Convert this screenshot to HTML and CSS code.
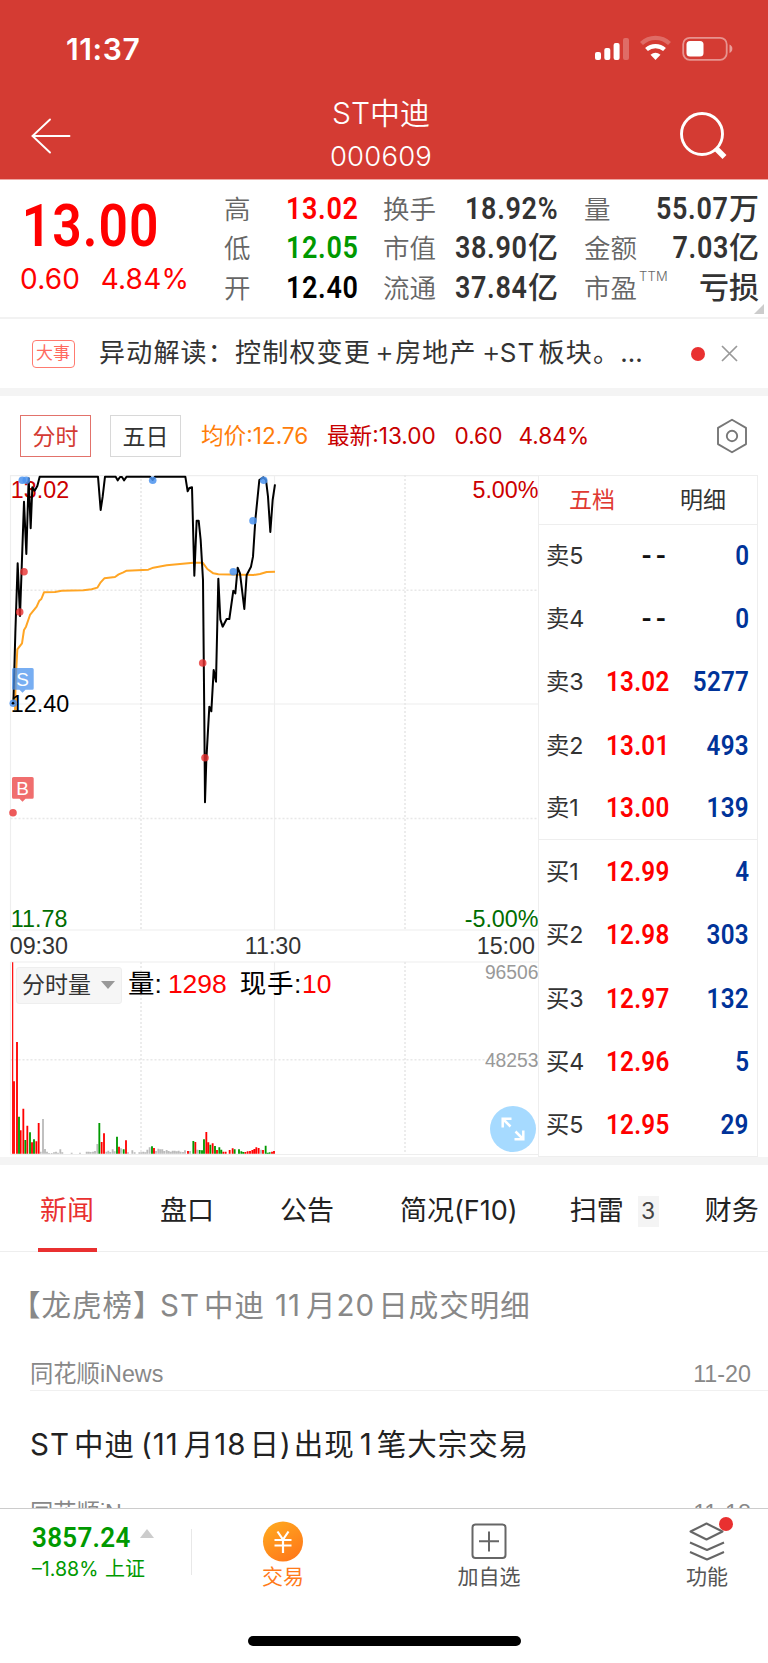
FILE: index.html
```html
<!DOCTYPE html>
<html lang="zh-CN">
<head>
<meta charset="utf-8">
<title>ST中迪 000609</title>
<link rel="stylesheet" href="styles.css">
</head>
<body>
<div class="screen">
  <header class="header">
    <div class="status">
      <span class="clock">11:37</span>
      <svg class="status-icons" width="140" height="28" viewBox="0 0 140 28" fill="#fff">
        <rect x="0" y="17" width="6" height="8" rx="2"/><rect x="9.3" y="13" width="6" height="12" rx="2"/><rect x="18.6" y="8" width="6" height="17" rx="2"/><rect x="28" y="3" width="6" height="22" rx="2" opacity=".25"/>
        <g fill="none" stroke="#fff" stroke-width="4.2">
          <path d="M46.5 8.5a20 20 0 0 1 28 0" opacity=".25"/><path d="M51.5 14.5a13.5 13.5 0 0 1 18 0"/>
        </g>
        <path d="M55.5 19.7a8 8 0 0 1 10 0l-5 5.300z"/>
        <rect x="88.200" y="2.800" width="43.500" height="22" rx="6.500" fill="none" stroke="#fff" stroke-width="1.800" opacity=".45"/>
        <rect x="91.500" y="6" width="17" height="15.500" rx="3.500"/><path d="M134.500 9.500a4.600 4.600 0 0 1 0 8.500z" opacity=".5"/>
      </svg>
    </div>
    <div class="nav">
      <svg width="40" height="36" viewBox="0 0 40 36" fill="none" stroke="#fff" stroke-width="1.900" stroke-linecap="round"><path d="M38.500 18H1.500M19 1.500L1.500 18L19 34.500"/></svg>
      <div class="nav-title"><span class="stock-name">ST中迪</span><span class="stock-code">000609</span></div>
      <svg width="48" height="48" viewBox="0 0 48 48" fill="none" stroke="#fff"><circle cx="22" cy="22" r="20.500" stroke-width="2.900"/><path d="M36.500 37l8 8" stroke-width="5.500"/></svg>
    </div>
  </header>

  <section class="quote">
    <div class="quote-main">
      <span class="price">13.00</span>
      <div class="change"><span>0.60</span><span>4.84%</span></div>
    </div>
    <dl class="stats stats-a">
      <dt>高</dt><dd class="up"><span>13.02</span></dd><dt>低</dt><dd class="down"><span>12.05</span></dd><dt>开</dt><dd class="flat"><span>12.40</span></dd>
    </dl>
    <dl class="stats stats-b">
      <dt>换手</dt><dd><span>18.92%</span></dd><dt>市值</dt><dd><span>38.90</span><b>亿</b></dd><dt>流通</dt><dd><span>37.84</span><b>亿</b></dd>
    </dl>
    <dl class="stats stats-c">
      <dt>量</dt><dd><span>55.07</span><b>万</b></dd><dt>金额</dt><dd><span>7.03</span><b>亿</b></dd><dt class="ttm">市盈<sup>TTM</sup></dt><dd><b>亏损</b></dd>
    </dl>
    <i class="corner"></i>
  </section>

  <section class="event">
    <span class="event-tag">大事</span>
    <span class="event-text">异动解读：控制权变更<i class="plus">+</i>房地产<i class="plus2">+</i>ST<i class="gap"></i>板块。<i class="dots">…</i></span>
    <i class="event-dot"></i>
    <svg width="17" height="17" viewBox="0 0 17 17" fill="none" stroke="#999" stroke-width="1.700"><path d="M1 1l15 15M16 1L1 16"/></svg>
  </section>

  <section class="toolbar">
    <button class="period active">分时</button><button class="period">五日</button>
    <span class="avg">均价:12.76</span><span class="last">最新:13.00</span><span class="last-diff">0.60</span><span class="last-pct">4.84%</span>
    <svg class="gear" width="32" height="36" viewBox="0 0 32 36" fill="none" stroke="#777" stroke-width="1.900"><path d="M16 1.800L30 9.900V26.100L16 34.200L2 26.100V9.900Z" stroke-linejoin="round"/><circle cx="16" cy="18" r="5.200"/></svg>
  </section>

  <section class="market">
    <div class="chart">
      <svg width="538" height="682" viewBox="0 475 538 682">
        <g fill="none" stroke="#eee" stroke-width="1.200">
          <path d="M10.500 475.600H538M10.500 704H538M10.500 930H538M10.500 962H538M10.500 1154.500H538M10.500 475V930M10.500 962V1154M274.500 475V930M274.500 962V1154"/>
          <path d="M10.500 590.300H538M10.500 818.500H538M141 475V930M405 475V930M10.500 1059.700H538M141 962V1154M405 962V1154" stroke="#e8e8e8" stroke-width="1.600" stroke-dasharray="2 2"/>
        </g>
        <g class="axis">
          <text x="10.800" y="497.500" fill="#c00">13.02</text><text x="538.500" y="497.500" fill="#c00" text-anchor="end">5.00%</text>
          <text x="10.800" y="926.500" fill="#006d00">11.78</text><text x="538.500" y="926.500" fill="#006d00" text-anchor="end">-5.00%</text>
          <text x="9.700" y="954" fill="#333">09:30</text><text x="273" y="954" fill="#333" text-anchor="middle">11:30</text><text x="535" y="954" fill="#333" text-anchor="end">15:00</text>
        </g>
        <g transform="translate(0 400) scale(.33333)" fill="none" stroke-linejoin="round">
          <path stroke="#ffa524" stroke-width="6" d="M45 930L47 840L52 748L66 730L72 690L78 680L90 645L110 620L118 602L124 597L132 577L165 576L185 572L250 571L275 568L292 563L302 547L313 535L345 531L356 523L370 517L380 512L445 509L460 503L500 496L580 488L608 488L622 507L640 520L655 523L760 525L780 522L800 516L825 515"/>
          <path stroke="#000" stroke-width="6" d="M40 912L46 700L53 490L60 648L72 305L79 462L86 235L92 385L97 262L104 272L112 258L119 230H294L302 330L308 290L315 230H347L353 241L360 231H366L372 241L380 230H450L458 240L465 230H556L563 274L568 264L576 262L583 527L590 362H596L602 420L609 540L613 960L615 1207L619 1080L628 920L634 934L641 810L648 845L655 536L661 658L668 680L680 657H688L700 572L706 580L713 503L720 520L733 627L740 525L753 500L759 470L766 360L778 240L790 232L798 240L804 290L811 396L818 300L825 253"/>
        </g>
        <text class="axis" x="10.800" y="711.500" fill="#000">12.40</text>
        <g fill="#4b93ee" fill-opacity=".85"><circle cx="22.300" cy="480.300" r="3.800"/><circle cx="26.300" cy="480.300" r="3.800"/><circle cx="152.700" cy="480.300" r="3.800"/><circle cx="263.700" cy="480.300" r="3.800"/><circle cx="253" cy="520.700" r="3.800"/><circle cx="233.300" cy="571.700" r="3.800"/><circle cx="13.300" cy="703.300" r="3.800"/><path d="M13.500 668h18.700a1.500 1.500 0 0 1 1.500 1.500v18.700a1.500 1.500 0 0 1-1.500 1.500h-6.700l-3 3l-3-3h-6a1.500 1.500 0 0 1-1.500-1.500v-18.700a1.500 1.500 0 0 1 1.500-1.500z" fill-opacity=".75"/></g>
        <circle cx="13" cy="703.300" r="1.300"/>
        <g fill="#e93030" fill-opacity=".8"><circle cx="24" cy="571.700" r="3.800"/><circle cx="19.700" cy="612" r="3.800"/><circle cx="202.700" cy="663" r="3.800"/><circle cx="205" cy="757.700" r="3.800"/><circle cx="13" cy="812.700" r="3.800"/><path d="M13.500 777h18.700a1.500 1.500 0 0 1 1.500 1.500v18.700a1.500 1.500 0 0 1-1.500 1.500h-6.700l-3 3l-3-3h-6a1.500 1.500 0 0 1-1.500-1.500v-18.700a1.500 1.500 0 0 1 1.500-1.500z" fill-opacity=".7"/></g>
        <g class="marker"><text x="22.700" y="686">S</text><text x="22.700" y="795">B</text></g>
        <g transform="translate(0 940) scale(.33333)" fill="none" stroke-width="5.500">
          <path stroke="#bbb" d="M122 641v-6M129 641V537M135 641V627M141 641v-6M147 641v-2M155 641v-2M162 641v-4M168 641v-6M174 641v-3M181 641V628M187 641v-4M215 641v-3M240 641v-3M260 641v-6M266 641v-6M272 641v-5M279 641v-6M285 641v-8M292 641V612M319 641v-6M325 641v-9M331 641v-5M338 641V628M344 641v-7M363 641v-16M384 641v-4M397 641v-10M404 641v-4M418 641v-4M424 641v-4M430 641v-6M436 641v-4M442 641v-12M449 641V622M468 641v-8M475 641v-15M481 641v-13M487 641v-13M493 641v-8M500 641v-11M506 641v-8M512 641v-6M518 641v-9M524 641v-9M530 641v-7M536 641v-9M542 641v-6M549 641v-5M555 641v-10M570 641v-8M592 641v-12M783 641v-12"/>
          <path stroke="#f00" d="M42 641V424M51 641V306M62 641V571M70 641V506M82 641V557M96 641V607M109 641V604M116 641V549M305 641V606M312 641V580M357 641V620M378 641V601M462 641V624M564 641v-8M586 641V606M619 641V576M625 641V607M638 641V610M651 641V630M670 641v-6M677 641v-6M689 641V630M698 641V625M736 641v-5M743 641v-7M750 641v-8M757 641v-11M763 641V627M769 641V622M776 641V624M789 641V630M816 641v-6M822 641V633"/>
          <path stroke="#f00" stroke-width="3.500" d="M38 641V67"/>
          <path stroke="#090" d="M57 641V530M76 641V600M90 641V577M102 641V598M298 641V549M351 641V590M371 641V628M456 641V619M580 641V603M599 641V630M606 641V631M612 641V598M631 641V614M645 641V618M658 641V622M664 641V629M704 641V628M717 641V628M724 641V634M730 641V636M797 641V617M803 641v-3M809 641v-4"/>
        </g>
        <g class="vol-axis"><text x="538.500" y="979">96506</text><text x="538.500" y="1067">48253</text></g>
      </svg>
      <div class="vol-legend"><span class="vol-select">分时量<i></i></span><span>量:</span><em class="v1">1298</em><span class="v2">现手:</span><em>10</em></div>
      <svg class="expand" width="46" height="46" viewBox="0 0 46 46"><circle cx="23" cy="23" r="23" fill="#a6daff"/><path d="M20.500 20.500L13 13M12.700 21.500V12.700H21.500M25.500 25.500L33 33M33.300 24.500V33.300H24.500" fill="none" stroke="#fff" stroke-width="2.500"/></svg>
    </div>
    <div class="book">
      <div class="book-tabs"><span class="active">五档</span><span>明细</span></div>
      <div class="row"><span>卖5</span><b class="none">--</b><em>0</em></div>
      <div class="row"><span>卖4</span><b class="none">--</b><em>0</em></div>
      <div class="row"><span>卖3</span><b>13.02</b><em>5277</em></div>
      <div class="row"><span>卖2</span><b>13.01</b><em>493</em></div>
      <div class="row ask-end"><span>卖1</span><b>13.00</b><em>139</em></div>
      <div class="row"><span>买1</span><b>12.99</b><em>4</em></div>
      <div class="row"><span>买2</span><b>12.98</b><em>303</em></div>
      <div class="row"><span>买3</span><b>12.97</b><em>132</em></div>
      <div class="row"><span>买4</span><b>12.96</b><em>5</em></div>
      <div class="row"><span>买5</span><b>12.95</b><em>29</em></div>
    </div>
  </section>

  <nav class="tabs">
    <span class="tab active">新闻</span><span class="tab">盘口</span><span class="tab">公告</span><span class="tab">简况(F10)</span><span class="tab">扫雷<i class="count">3</i></span><span class="tab">财务</span>
  </nav>

  <section class="news">
    <article class="item read">
      <h3><span class="bracket">【龙虎榜】</span><span class="n1">ST</span><span class="n2">中迪</span><span class="n3">11</span><span class="n4">月</span><span class="n5">20</span><span class="n6">日成交明细</span></h3>
      <p><span>同花顺iNews</span><time>11-20</time></p>
    </article>
    <article class="item">
      <h3><span>ST</span><span class="n2">中迪</span><span class="m3">(11</span><span class="m4">月</span><span class="m5">18</span><span class="m6">日</span><span class="m7">)</span><span class="m8">出现</span><span class="m9">1</span><span class="m10">笔大宗交易</span></h3>
      <p><span>同花顺iNews</span><time>11-18</time></p>
    </article>
  </section>

  <footer class="footer">
    <div class="bar">
      <div class="index"><div class="index-top"><b>3857.24</b><i></i></div><span>–1.88% <em>上证</em></span></div>
      <div class="action trade">
        <svg width="42" height="42" viewBox="0 0 42 42"><defs><linearGradient id="orange" x1="0" y1="0" x2=".6" y2="1"><stop offset="0" stop-color="#ffac1f"/><stop offset="1" stop-color="#ff7b1a"/></linearGradient></defs><circle cx="21" cy="21.500" r="20" fill="url(#orange)"/><path d="M15.500 11.500l5.500 8l5.500-8M12.500 20h17M12.500 25.500h17M21 19.500v13.500" fill="none" stroke="#fff" stroke-width="2.200"/></svg>
        <span>交易</span>
      </div>
      <div class="action add">
        <svg width="42" height="42" viewBox="0 0 42 42" fill="none" stroke="#666" stroke-width="2"><rect x="4.500" y="4.500" width="33" height="33.500" rx="3"/><path d="M21 11.500v20M11 21.300h20"/></svg>
        <span>加自选</span>
      </div>
      <div class="action more">
        <svg width="42" height="42" viewBox="0 0 42 42" fill="none" stroke="#666" stroke-width="2" stroke-linejoin="round"><path d="M20.500 3.500L36.500 11.500L20.500 19.500L4.500 11.500ZM4 22.500L21 30L38 22.500M4 32L21 39.500L38 32"/></svg>
        <i class="badge"></i>
        <span>功能</span>
      </div>
    </div>
    <i class="home"></i>
  </footer>
</div>
</body>
</html>
```
FILE: styles.css
```css
* { box-sizing: border-box; margin: 0; padding: 0; }
body { width: 768px; background: #fff; font-family: "Inter", "Noto Sans CJK SC", sans-serif; color: #333; }
i, em { font-style: normal; }
svg { display: block; flex: none; }
.screen { width: 768px; height: 1663px; display: flex; flex-direction: column; overflow: hidden; white-space: nowrap; }

.header { height: 180px; flex: none; background: #d43b33; border-bottom: 1px solid #eda7a3; color: #fff; }
.status { height: 94px; padding: 35px 33px 0 66px; display: flex; justify-content: space-between; align-items: flex-start; }
.clock { font-size: 30px; line-height: 28px; font-weight: 600; letter-spacing: .6px; }
.nav { height: 83px; padding: 0 40px 0 31px; display: flex; justify-content: space-between; align-items: center; }
.nav-title { display: flex; flex-direction: column; align-items: center; padding-left: 11px; font-weight: 350; }
.stock-name { font-size: 30px; line-height: 43px; margin-top: -3px; }
.stock-code { font-size: 27.500px; line-height: 42px; letter-spacing: .2px; }

.quote { height: 139px; flex: none; display: flex; border-bottom: 2px solid #f2f2f2; position: relative; }
.quote-main { width: 224px; padding-left: 20px; color: #f00; }
.price { display: block; width: 160px; margin-top: 16px; font: 600 60px/60px Roboto, sans-serif; letter-spacing: 1.200px; padding-left: 2px; transform: scaleX(.86); transform-origin: 0 50%; }
.change { display: flex; gap: 20.500px; font-size: 28px; line-height: 34px; margin-top: 6px; letter-spacing: .2px; }
.stats { display: grid; grid-template-columns: auto 1fr; grid-auto-rows: 39.400px; padding-top: 9px; line-height: 39px; }
.stats dt { font-size: 26.500px; color: #666; font-weight: 350; padding-top: 1px; }
.stats dd { text-align: right; font: 600 31px/39px Roboto, "Noto Sans CJK SC", sans-serif; }
.stats dd span { display: inline-block; transform: scaleX(.87); transform-origin: 100% 50%; letter-spacing: .8px; }
.stats b { font-size: 30px; font-weight: 500; }
.stats-a { width: 135px; margin-right: 24px; }
.stats-b { width: 175px; margin-right: 26px; }
.stats-c { width: 175px; }
.up { color: #f00; }
.down { color: #090; }
.flat { color: #000; }
.ttm { position: relative; }
.ttm sup { position: absolute; left: 55px; top: -2px; font-size: 13px; line-height: 20px; letter-spacing: .2px; }
.corner { position: absolute; right: 4px; bottom: 3px; border-left: 10px solid transparent; border-bottom: 10px solid #ccc; }

.event { height: 77px; flex: none; padding-left: 31.500px; display: flex; align-items: center; border-bottom: 8px solid #f4f4f4; }
.event-tag { width: 43px; height: 28px; border: 1px solid #ff7b70; border-radius: 4px; color: #ff6a5e; font-size: 17px; line-height: 25px; text-align: center; }
.event-text { width: 566px; margin-left: 24.500px; font-size: 26px; letter-spacing: 1.200px; line-height: 36px; padding-bottom: 1px; }
.plus { margin: 0 2px 0 4px; font-size: 29px; line-height: 20px; font-weight: 300; letter-spacing: -.8px; }
.plus2 { margin: 0 0 0 5px; font-size: 29px; line-height: 20px; font-weight: 300; letter-spacing: -1px; }
.gap { margin-left: 3px; }
.dots { letter-spacing: 0; }
.event-dot { width: 14px; height: 14px; border-radius: 7px; background: #e93030; margin: 0 16px 0 26px; }

.toolbar { height: 79px; flex: none; display: flex; align-items: center; padding-left: 20px; font-size: 22.600px; }
.period { width: 71px; height: 42px; border: 1px solid #d8d8d8; background: #fff; font: 23px/36px "Noto Sans CJK SC", sans-serif; color: #333; margin-right: 19px; padding-bottom: 2px; }
.period.active { border-color: #e2726b; color: #d43b33; }
.toolbar span { line-height: 38px; }
.avg { color: #ff7d0a; width: 126px; margin-left: 1px; }
.last, .last-diff, .last-pct { color: #c80000; }
.last { width: 127.500px; }
.last-diff { width: 64px; }
.gear { margin-left: auto; margin-right: 20px; }

.market { height: 690px; flex: none; display: flex; border-bottom: 8px solid #f4f4f4; }
.chart { width: 538px; position: relative; }
.axis { font: 23.300px "Liberation Sans", sans-serif; }
.vol-axis { font: 19.300px "Liberation Sans", sans-serif; text-anchor: end; fill: #999; }
.marker { font: 19px "Liberation Sans", sans-serif; text-anchor: middle; fill: #fff; }
.vol-legend { position: absolute; left: 16px; top: 490px; display: flex; align-items: center; height: 38px; font: 26.500px/38px "Liberation Sans", "Noto Sans CJK SC", sans-serif; color: #000; }
.vol-legend em { color: #f00; }
.vol-select { width: 106px; height: 37px; background: #f6f6f6; border: 1px solid #eee; border-radius: 3px; padding-left: 5px; font-size: 23px; line-height: 35px; color: #333; display: flex; align-items: center; margin: 2px 6px 0 0; }
.vol-select i { margin-left: 10px; border: 7.500px solid transparent; border-top: 8px solid #999; border-bottom: 0; }
.v1 { margin-left: 6px; margin-right: 13px; }
.v2 { letter-spacing: .6px; }
.expand { position: absolute; left: 490px; top: 631px; }
.book { width: 220px; border: 1px solid #eee; }
.book-tabs { height: 49px; display: flex; border-bottom: 1px solid #eee; font-size: 23px; line-height: 48px; justify-content: space-between; padding: 0 31px 0 30px; }
.book-tabs .active { color: #e03a32; }
.row { height: 63.300px; display: flex; align-items: center; padding: 0 8px 2px 7px; font: 25px/36px Roboto, "Noto Sans CJK SC", sans-serif; }
.row span { width: 60px; font-family: "Inter", "Noto Sans CJK SC", sans-serif; font-size: 23.300px; }
.row b { width: 64px; color: #f00; font-size: 28px; font-weight: 600; letter-spacing: .3px; transform: scaleX(.865); transform-origin: 0 50%; }
.row .none { color: #111; text-align: right; letter-spacing: 4px; transform: none; }
.row em { margin-left: auto; color: #039; font-size: 28px; font-weight: 600; letter-spacing: .3px; transform: scaleX(.865); transform-origin: 100% 50%; }
.ask-end { border-bottom: 1px solid #eee; height: 62.300px; margin-bottom: 1px; }

.tabs { height: 87px; flex: none; display: flex; border-bottom: 1px solid #eee; padding-left: 37.500px; font-size: 27px; line-height: 91px; color: #222; }
.tab { height: 87px; padding: 0 2.500px; margin-right: 61px; }
.tab:nth-child(3) { margin-right: 61px; }
.tab:nth-child(4) { margin-right: 47px; }
.tab:nth-child(5) { margin-right: 41px; }
.tab.active { color: #e93030; border-bottom: 4px solid #e93030; }
.count { display: inline-block; width: 21px; height: 31px; margin-left: 14px; background: #f4f4f4; font-size: 23px; line-height: 31px; text-align: center; color: #444; vertical-align: 1px; }

.news { height: 256px; flex: none; overflow: hidden; }
.item { height: 139px; margin-left: 30px; border-bottom: 1px solid #f0f0f0; display: flex; flex-direction: column; }
.item h3 { height: 108px; line-height: 106px; font-size: 29.500px; font-weight: 400; letter-spacing: 1px; color: #222; display: flex; }
.item.read h3 { color: #888; }
.item p { display: flex; justify-content: space-between; padding-right: 17px; font: 23.300px/28px "Liberation Sans", "Noto Sans CJK SC", sans-serif; color: #888; }
.bracket { margin-left: -19px; width: 149px; }
.n2 { margin-left: 4px; }
.n3 { margin-left: 10px; }
.n4, .m4, .m9 { margin-left: 5px; }
.n6, .m6 { margin-left: 3px; }
.m3 { margin-left: 6px; }
.m8 { margin-left: 2px; }
.m10 { margin-left: 4px; }

.footer { height: 155px; flex: none; border-top: 1px solid #ccc; display: flex; flex-direction: column; align-items: center; }
.bar { width: 768px; height: 127px; position: relative; display: flex; padding-top: 11px; }
.index { width: 160px; margin: 9px 0 0 32px; height: 46px; border-right: 1px solid #e8e8e8; color: #090; font-size: 19.600px; }
.index-top { display: flex; align-items: center; height: 18px; gap: 9px; }
.index b { width: 99px; font: 600 28px/18px Roboto, sans-serif; letter-spacing: .3px; transform: scaleX(.93); transform-origin: 0 50%; }
.index i { border: 7.500px solid transparent; border-bottom: 9px solid #ccc; border-top: 0; margin-top: -10px; }
.index > span { display: block; margin-top: 7px; line-height: 30px; }
.index em { font-size: 20px; margin-left: 1px; }
.action { width: 80px; display: flex; flex-direction: column; align-items: center; font-size: 21px; line-height: 30px; color: #555; position: relative; }
.trade { margin-left: 51px; color: #ff7b1a; }
.add { margin-left: 126px; }
.more { margin-left: 138px; }
.badge { position: absolute; left: 52px; top: -3px; width: 14px; height: 14px; border-radius: 7px; background: #e93030; }
.home { width: 273px; height: 10px; border-radius: 5px; background: #000; }
```
